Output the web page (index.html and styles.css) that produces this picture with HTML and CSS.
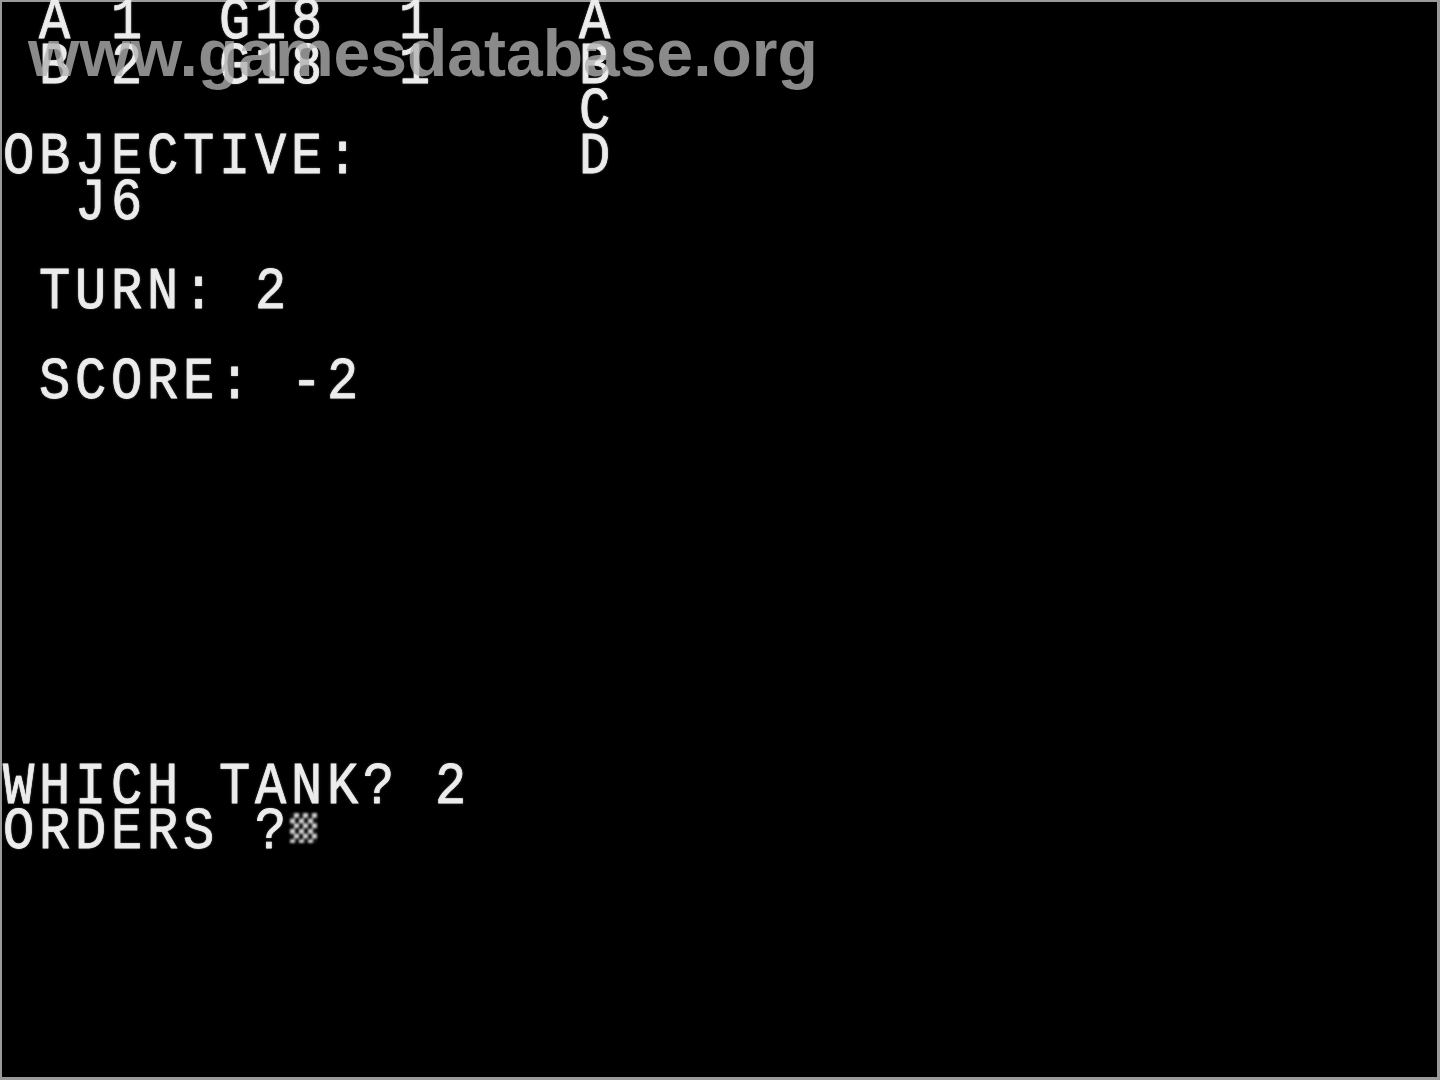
FILE: index.html
```html
<!DOCTYPE html>
<html>
<head>
<meta charset="utf-8">
<title>Apple II screen</title>
<link rel="stylesheet" href="styles.css">
</head>
<body>
<div class="screen">
<pre class="text"> A 1  G18  1    A
 B 2  G18  1    B
                C
OBJECTIVE:      D
  J6

 TURN: 2

 SCORE: -2








WHICH TANK? 2
ORDERS ?<span class="cursor"></span></pre>
<div class="watermark">www.gamesdatabase.org</div>
</div>
</body>
</html>
```

FILE: styles.css
```css
html, body {
  margin: 0;
  padding: 0;
  background: #000;
}

.screen {
  position: relative;
  width: 1440px;
  height: 1080px;
  background: #000;
  overflow: hidden;
  box-shadow: inset 2px 2px 0 #9a9a9a, inset -3px -3px 0 #9a9a9a;
}

.text {
  margin: 0;
  padding: 0 0 0 3px;
  font-family: "Liberation Mono", "DejaVu Sans Mono", monospace;
  font-size: 52px;
  letter-spacing: 4.8px;
  line-height: 39.13px;
  transform: scaleY(1.15);
  transform-origin: 0 0;
  color: #ececec;
  -webkit-text-stroke: 0.7px #ececec;
  text-shadow: 0 0 2px rgba(255, 255, 255, 0.6);
  white-space: pre;
}

.cursor {
  display: inline-block;
  width: 27px;
  height: 26px;
  margin-left: -1px;
  vertical-align: top;
  margin-top: 3px;
  background: repeating-conic-gradient(#cfcfcf 0 25%, #111 0 50%) 0 0 / 9px 9px;
  filter: blur(0.8px);
}

.watermark {
  position: absolute;
  left: 28px;
  top: 20px;
  font-family: "Liberation Sans", Arial, sans-serif;
  font-weight: bold;
  font-size: 66px;
  line-height: 1;
  color: rgba(177, 177, 177, 0.78);
  white-space: nowrap;
}
```
